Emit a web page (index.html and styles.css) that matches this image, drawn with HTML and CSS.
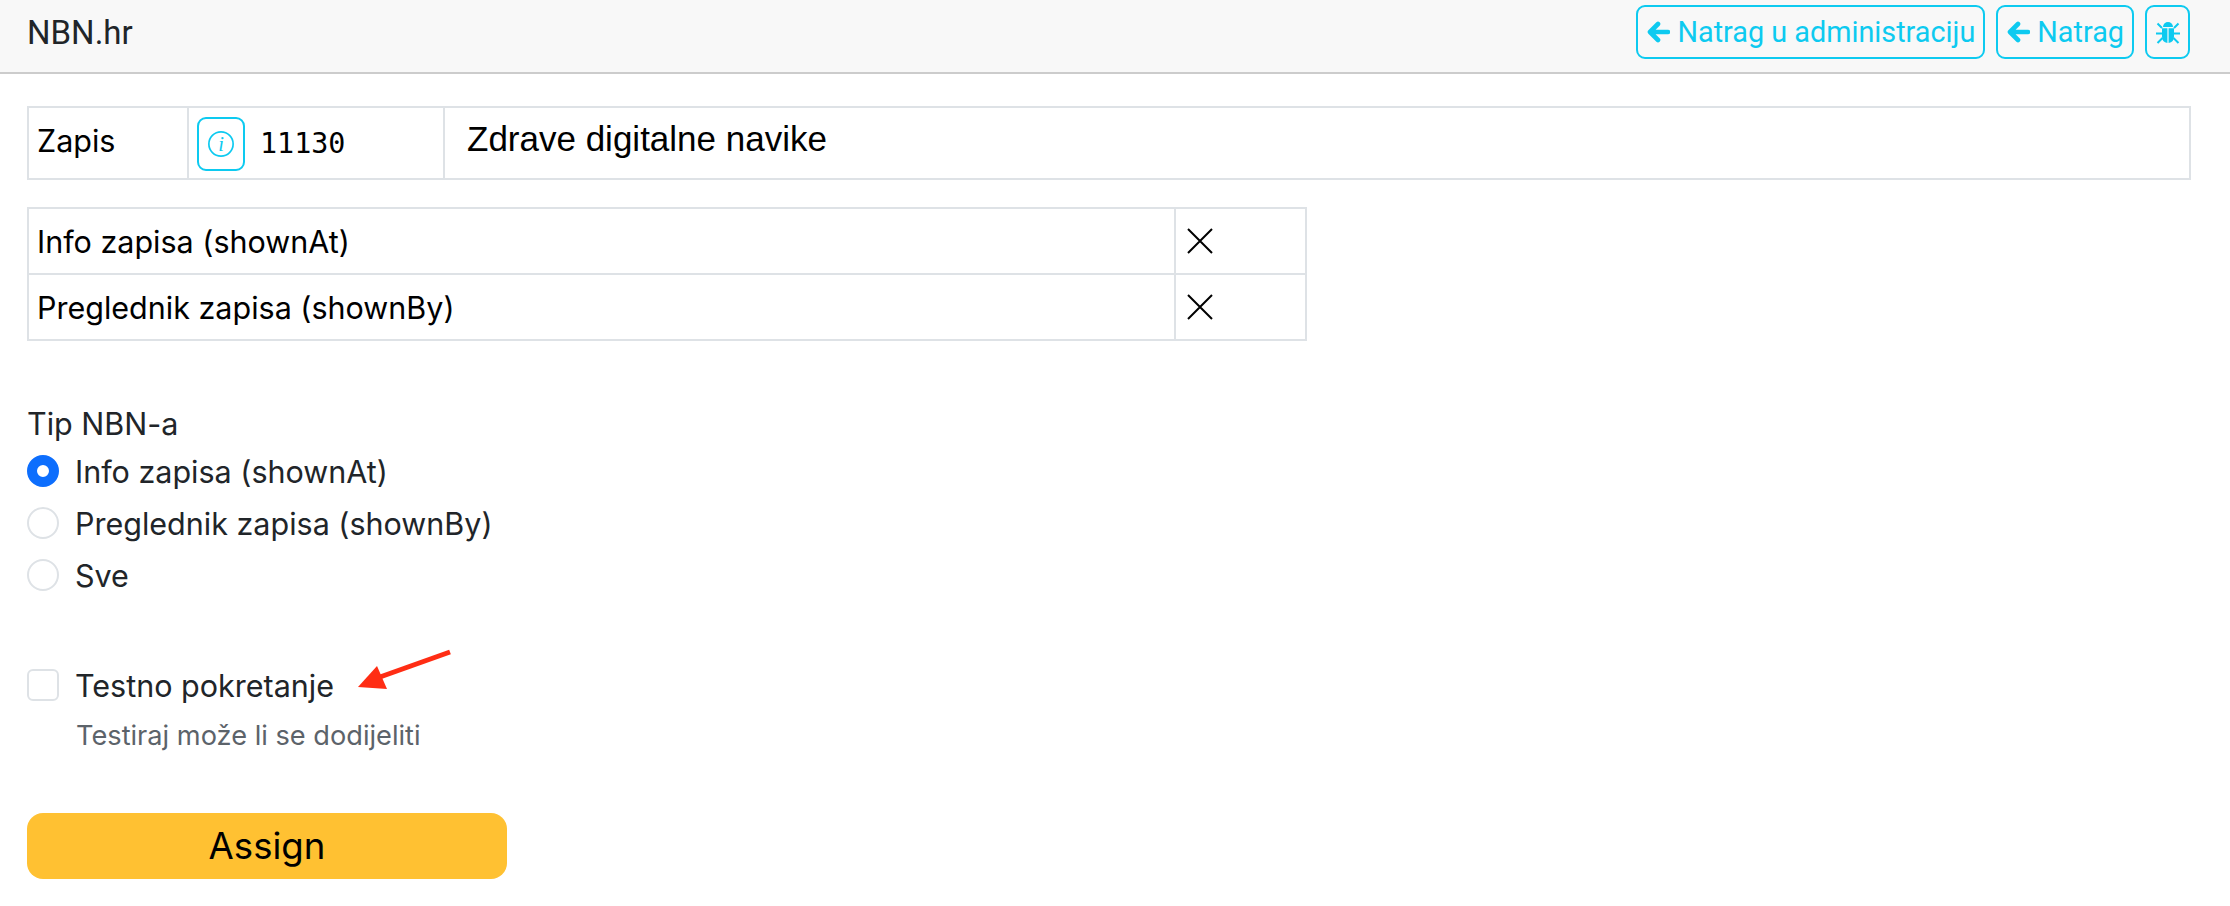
FILE: index.html
```html
<!DOCTYPE html>
<html lang="en">
<head>
    <meta charset="UTF-8">
    <title>NBN.hr</title>
    <link rel="stylesheet" href="styles.css">
</head>
<body>
    <header class="topbar">
        <span class="brand">NBN.hr</span>
        <nav class="topbar-actions">
            <a class="btn-outline"><svg class="arrow-left" viewBox="0 0 24 24"><path d="M12 4 4 12 12 20M5 12H22" fill="none" stroke="currentColor" stroke-width="4.600" stroke-linecap="round" stroke-linejoin="round"/></svg>Natrag u administraciju</a>
            <a class="btn-outline"><svg class="arrow-left" viewBox="0 0 24 24"><path d="M12 4 4 12 12 20M5 12H22" fill="none" stroke="currentColor" stroke-width="4.600" stroke-linecap="round" stroke-linejoin="round"/></svg>Natrag</a>
            <a class="btn-outline btn-bug"><svg viewBox="0 0 24 24" class="bug"><path d="M7 7a5 5 0 0 1 10 0z" fill="currentColor"/><path d="M6 8.200h5.400V23A6.500 6.500 0 0 1 6 16.500zM18 8.200h-5.400V23A6.500 6.500 0 0 0 18 16.500z" fill="currentColor"/><path d="M1.500 3.500 6 8M22.500 3.500 18 8M0 13.500h6M24 13.500h-6M1.500 23 6.500 18M22.500 23 17.500 18" stroke="currentColor" stroke-width="2" fill="none"/></svg></a>
        </nav>
    </header>

    <main class="content">
        <table class="record-table">
            <tr>
                <td class="record-label">Zapis</td>
                <td class="record-id">
                    <div class="record-id-inner">
                        <a class="btn-outline btn-info"><svg viewBox="0 0 30 30"><circle cx="15" cy="15" r="13" fill="none" stroke="currentColor" stroke-width="1.800"/><text x="15" y="22" class="info-i">i</text></svg></a>
                        <code class="record-num">11130</code>
                    </div>
                </td>
                <td class="record-title">Zdrave digitalne navike</td>
            </tr>
        </table>

        <table class="nbn-table">
            <tr>
                <td>Info zapisa (shownAt)</td>
                <td class="nbn-status"><svg viewBox="0 0 26 26"><path d="M1 1 25 25M25 1 1 25" stroke="#000" stroke-width="2" fill="none"/></svg></td>
            </tr>
            <tr>
                <td>Preglednik zapisa (shownBy)</td>
                <td class="nbn-status"><svg viewBox="0 0 26 26"><path d="M1 1 25 25M25 1 1 25" stroke="#000" stroke-width="2" fill="none"/></svg></td>
            </tr>
        </table>

        <form class="assign-form">
            <div class="field-label">Tip NBN-a</div>
            <label class="check-row"><span class="radio radio-on"></span>Info zapisa (shownAt)</label>
            <label class="check-row"><span class="radio"></span>Preglednik zapisa (shownBy)</label>
            <label class="check-row"><span class="radio"></span>Sve</label>

            <div class="test-run">
                <label class="check-row"><span class="checkbox"></span>Testno pokretanje</label>
                <svg class="annotation" viewBox="0 0 94 42"><path d="M92 3 22 28" stroke="#ff2d14" stroke-width="5" fill="none"/><path d="M0 38 19 17 29 40z" fill="#ff2d14"/></svg>
                <div class="help-text">Testiraj može li se dodijeliti</div>
            </div>

            <button type="button" class="btn-assign">Assign</button>
        </form>
    </main>
</body>
</html>
```

FILE: styles.css
```css
* { box-sizing: border-box; }
body { margin: 0; font-family: Inter, "Liberation Sans", sans-serif; font-size: 30.5px; color: #000; background: #fff; }

.topbar { height: 74px; padding: 5px 40px 0 27px; display: flex; justify-content: space-between; background: #f8f8f8; border-bottom: 2px solid #ccc; }
.brand { font-family: Roboto, sans-serif; font-size: 33px; line-height: 56px; color: #212529; }
.topbar-actions { display: flex; gap: 11px; }
.btn-outline { display: inline-flex; align-items: center; justify-content: center; height: 54px; padding: 0 8px; border: 2px solid #0dcaf0; border-radius: 9px; color: #0dcaf0; font-family: Roboto, sans-serif; font-size: 28.8px; }
.arrow-left { width: 24px; height: 24px; margin-right: 7px; }
.btn-bug { width: 45px; padding: 0; }
.bug { width: 24px; height: 24px; }

.content { padding: 32px 39px 0 27px; }
table { border-collapse: collapse; }
td { border: 2px solid #dee2e6; padding: 0 8px; }

.record-table { width: 100%; height: 74px; }
.record-label { width: 160px; padding-bottom: 5px; }
.record-id { width: 256px; padding: 2px 8px 0; }
.record-id-inner { display: flex; align-items: center; gap: 15px; }
.btn-info { width: 48px; padding: 0; }
.btn-info svg { width: 28px; height: 28px; }
.info-i { font-family: "Liberation Serif", serif; font-style: italic; font-size: 22px; text-anchor: middle; fill: currentColor; }
.record-num { font-family: "DejaVu Sans Mono", monospace; font-size: 28.4px; margin-top: -2px; }
.record-title { padding: 0 0 8px 22px; font-family: "Liberation Sans", sans-serif; font-size: 35px; }

.nbn-table { width: 1280px; margin-top: 27px; }
.nbn-table td { height: 66px; }
.nbn-status { width: 131px; padding-left: 11px; line-height: 0; }
.nbn-status svg { width: 26px; height: 26px; }

.assign-form { margin-top: 62px; color: #212529; }
.field-label { line-height: 42px; }
.check-row { display: flex; align-items: center; gap: 16px; height: 52px; }
.radio { width: 32px; height: 32px; border: 2px solid #dee2e6; border-radius: 50%; }
.radio-on { border: 10px solid #0d6efd; }
.checkbox { width: 32px; height: 32px; border: 2px solid #dee2e6; border-radius: 6px; }

.test-run { position: relative; margin-top: 58px; }
.annotation { position: absolute; left: 331px; top: -10px; width: 94px; height: 42px; }
.help-text { margin: 5px 0 0 49px; font-size: 27.2px; color: #5c636a; line-height: 40px; }

.btn-assign { display: block; width: 480px; height: 66px; margin-top: 57px; border: 0; border-radius: 16px; background: #ffc132; color: #000; font-family: Inter, sans-serif; font-size: 36.6px; }
```
